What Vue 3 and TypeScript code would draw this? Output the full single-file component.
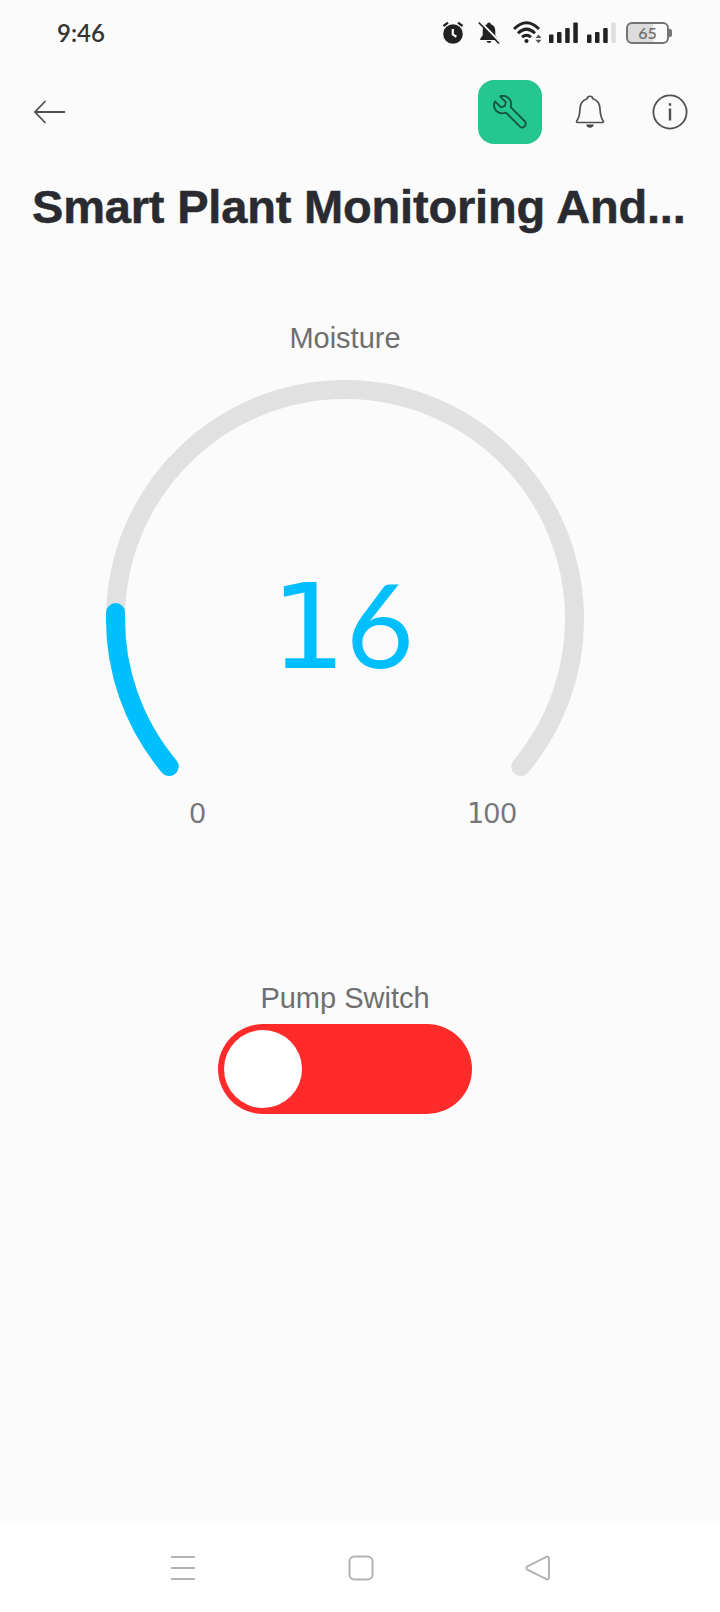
<script setup lang="ts">
import { computed, ref } from 'vue'

const moisture = ref(16)
const pumpOn = ref(false)

const center = { x: 239, y: 239 }
const radius = 229.5
const sweep = 260

function pointAt(percent: number): string {
  const angle = ((140 + (sweep * percent) / 100) * Math.PI) / 180
  const x = center.x + radius * Math.cos(angle)
  const y = center.y + radius * Math.sin(angle)
  return `${x.toFixed(2)} ${y.toFixed(2)}`
}

function arc(percent: number): string {
  const large = (sweep * percent) / 100 > 180 ? 1 : 0
  return `M${pointAt(0)}A${radius} ${radius} 0 ${large} 1 ${pointAt(percent)}`
}

const track = arc(100)
const level = computed(() => arc(moisture.value))
const digits = computed(() => String(moisture.value).split(''))
</script>

<template>
  <div class="screen">
    <header class="status">
      <span class="time">9:46</span>
      <div class="indicators">
        <svg class="alarm" width="22" height="24" viewBox="0 0 22 24">
          <circle cx="11" cy="13" r="9.8" fill="#222" />
          <path d="M1.500 5 6 1.600M20.500 5 16 1.600" stroke="#222" stroke-width="2.200" fill="none" />
          <path d="M10.800 8v5.500l3.600 2.200" stroke="#fbfbfb" stroke-width="2.200" fill="none" />
        </svg>
        <svg class="muted" width="22" height="24" viewBox="0 0 22 24">
          <path d="M11 1.500c1.200 0 1.800.7 1.800 1.800 3.300.9 4.500 3.700 4.500 7v4l2.500 3.400v1.200H2.200v-1.200l2.500-3.400v-4c0-3.300 1.200-6.100 4.500-7 0-1.100.6-1.800 1.800-1.800zM8.500 20h5c-.4 1.300-1.300 2-2.500 2s-2.100-.7-2.500-2z" fill="#222" />
          <path d="M2.500 1 23 22" stroke="#fbfbfb" stroke-width="2.200" />
          <path d="M.8 1.500 21 22.500" stroke="#222" stroke-width="1.700" />
        </svg>
        <svg class="wifi" width="30" height="24" viewBox="0 0 30 24">
          <g fill="none" stroke="#222" stroke-width="2.900">
            <path d="M1 8Q13.500-4.500 26 8" />
            <path d="M5 12.200Q13.500 4 22 12.200" />
            <path d="M9 16.200Q13.500 12.200 18 16.200" />
          </g>
          <circle cx="13.500" cy="20" r="2.100" fill="#222" />
          <path d="m22.500 17 3-3.500 3 3.500zM22.500 18.800l3 3.500 3-3.500z" fill="#555" />
        </svg>
        <svg class="signal" width="30" height="22" viewBox="0 0 30 22" fill="#222">
          <rect y="12.500" width="4.500" height="8.500" rx="1" /><rect x="8" y="10" width="4.500" height="11" rx="1" />
          <rect x="16.200" y="6" width="4.500" height="15" rx="1" /><rect x="24.300" y="0.500" width="4.500" height="20.500" rx="1" />
        </svg>
        <svg class="signal second" width="30" height="22" viewBox="0 0 30 22" fill="#222">
          <rect y="12.500" width="4.500" height="8.500" rx="1" /><rect x="8" y="10" width="4.500" height="11" rx="1" />
          <rect x="16.200" y="6" width="4.500" height="15" rx="1" /><rect x="24.300" y="0.500" width="4.500" height="20.500" rx="1" fill="#dedede" />
        </svg>
        <div class="battery"><span>65</span></div>
      </div>
    </header>

    <nav class="toolbar">
      <svg class="back" width="34" height="26" viewBox="0 0 34 26" fill="none" stroke="#505050" stroke-width="1.800">
        <path d="M32 13H2.500M12.500 2 2 13l10.500 11" />
      </svg>
      <div class="actions">
        <button class="tool" aria-label="Settings">
          <svg width="34" height="34" viewBox="0 0 34 34" fill="none" stroke="#16593f" stroke-width="1.900" stroke-linejoin="round">
            <path d="M7.200 1.300C11.500-.5 17 2.500 18.100 7.200c.2 1.600-.1 3.600-.4 5L32 26.500c2.400 3.500-1.700 7.500-5 5.200L12.900 17.600C7.400 19.800 1.500 16.500 1 10.300c0-1.400.4-2.900 1-3.900l6.100 6 3.700-1.500 1-3.700z" />
          </svg>
        </button>
        <svg class="bell" width="30" height="34" viewBox="0 0 30 34" fill="none" stroke="#505050" stroke-width="1.700" stroke-linejoin="round">
          <path d="M12.200 3.800C12.500.4 17.500.4 17.800 3.800c4.700 1.400 7 5 7.200 10 .2 5.400.6 8.600 3.200 12.100.6.800.3 1.600-.7 1.600h-25c-1 0-1.300-.8-.7-1.600C4.400 22.400 4.800 19.200 5 13.800c.2-5 2.500-8.600 7.200-10z" />
          <path d="M11.300 29.500h7.400c-.2 4.300-7.200 4.300-7.400 0z" fill="#444" stroke="none" />
        </svg>
        <svg class="info" width="36" height="36" viewBox="0 0 36 36" fill="none" stroke="#505050" stroke-width="1.800">
          <circle cx="18" cy="18" r="16.600" />
          <path d="M18 14.500v12M18 9.300v2.500" stroke-width="2.400" />
        </svg>
      </div>
    </nav>

    <h1>Smart Plant Monitoring And...</h1>

    <main>
      <section class="gauge">
        <h2>Moisture</h2>
        <div class="dial">
          <svg width="478" height="398" viewBox="0 0 478 398" fill="none" stroke-width="19" stroke-linecap="round">
            <path :d="track" stroke="#e1e1e1" />
            <path :d="level" stroke="#00bfff" />
          </svg>
          <div class="reading"><span v-for="(d, i) in digits" :key="i" :class="'digit-' + d">{{ d }}</span></div>
        </div>
        <div class="range"><span>0</span><span><b>1</b>00</span></div>
      </section>

      <section class="pump">
        <h2>Pump Switch</h2>
        <button class="switch" :class="{ on: pumpOn }" aria-label="Pump Switch" @click="pumpOn = !pumpOn"><i></i></button>
      </section>
    </main>

    <footer>
      <svg width="26" height="26" viewBox="0 0 26 26" stroke="#b2b2b2" stroke-width="2.200"><path d="M1 2h24M1 13h24M1 24h24" /></svg>
      <svg width="26" height="26" viewBox="0 0 26 26" fill="none" stroke="#b2b2b2" stroke-width="2"><rect x="1.500" y="1.500" width="23" height="23" rx="5" /></svg>
      <svg width="26" height="26" viewBox="0 0 26 26" fill="none" stroke="#b2b2b2" stroke-width="2"><path d="M2 11.700 21.200 1.900Q24 1 24 4v18q0 3-2.800 2.100L2 14.300q-1.500-1.300 0-2.600z" /></svg>
    </footer>
  </div>
</template>

<style>
body {
  margin: 0;
}
</style>

<style scoped>
.screen {
  width: 720px;
  height: 1612px;
  display: flex;
  flex-direction: column;
  background: #fbfbfb;
  font-family: "Liberation Sans", Arial, sans-serif;
  overflow: hidden;
}
.status {
  height: 65px;
  box-sizing: border-box;
  padding: 0 48px 0 57px;
  display: flex;
  justify-content: space-between;
  align-items: center;
}
.time {
  font: 600 24px/30px Lato, sans-serif;
  color: #333;
}
.indicators {
  display: flex;
  align-items: center;
}
.muted { margin-left: 14px; }
.wifi { margin-left: 13px; }
.signal { margin-left: 6px; }
.second { margin-left: 8px; }
.battery {
  position: relative;
  width: 43px;
  height: 22px;
  box-sizing: border-box;
  margin: 0 3px 0 9px;
  border: 2px solid #747474;
  border-radius: 6px;
  background: linear-gradient(90deg, #dcdcdc 65%, #fbfbfb 65%);
  font: 600 16px/18px Lato, sans-serif;
  color: #707070;
  text-align: center;
}
.battery::after {
  content: "";
  position: absolute;
  right: -5px;
  top: 5px;
  width: 3px;
  height: 8px;
  border-radius: 0 2px 2px 0;
  background: #747474;
}
.toolbar {
  height: 94px;
  box-sizing: border-box;
  padding: 0 32px 0 33px;
  display: flex;
  align-items: center;
  justify-content: space-between;
}
.actions {
  display: flex;
  align-items: center;
}
button {
  border: 0;
  padding: 0;
}
.tool {
  width: 64px;
  height: 64px;
  border-radius: 16px;
  background: #25c68f;
  display: flex;
  align-items: center;
  justify-content: center;
}
.bell { margin-left: 33px; }
.info { margin-left: 47px; }
h1 {
  margin: 18px 0 0 32px;
  font-size: 47px;
  line-height: 60px;
  font-weight: 700;
  letter-spacing: -0.18px;
  -webkit-text-stroke: 0.5px #2a2b30;
  color: #2a2b30;
  white-space: nowrap;
}
h2 {
  margin: 0;
  font-size: 29px;
  line-height: 36px;
  font-weight: 400;
  color: #6f6f6f;
  white-space: nowrap;
}
main {
  flex: 1;
  width: 690px;
  display: flex;
  flex-direction: column;
  align-items: center;
}
.gauge {
  margin-top: 83px;
  display: flex;
  flex-direction: column;
  align-items: center;
}
.dial {
  margin-top: 24px;
  height: 398px;
  display: grid;
}
.dial > * {
  grid-area: 1 / 1;
}
.reading {
  height: 140px;
  margin-top: 173px;
  display: flex;
  justify-content: center;
  align-items: baseline;
  font-size: 117px;
  line-height: 140px;
  color: #00bfff;
}
.reading span {
  width: 70px;
  text-align: center;
  font-family: Lato, sans-serif;
}
.reading .digit-1 {
  font-family: "DejaVu Sans Mono", monospace;
  transform: translateX(-4px) scaleX(1.06);
}
.range {
  width: 328px;
  margin: 18px 0 0 17px;
  display: flex;
  justify-content: space-between;
  font-size: 29px;
  line-height: 34px;
  letter-spacing: 0.8px;
  color: #777;
}
.range b {
  font: 400 28px/34px "DejaVu Sans Mono", monospace;
  letter-spacing: 0;
}
.pump {
  margin-top: 149px;
  display: flex;
  flex-direction: column;
  align-items: center;
}
.switch {
  width: 254px;
  height: 90px;
  box-sizing: border-box;
  margin-top: 8px;
  padding: 6px;
  border-radius: 45px;
  background: #ff2b2b;
  display: flex;
}
.switch.on {
  justify-content: flex-end;
}
.switch i {
  width: 78px;
  height: 78px;
  border-radius: 50%;
  background: #fff;
}
footer {
  height: 88px;
  box-sizing: border-box;
  padding: 0 169px 0 170px;
  background: #fff;
  display: flex;
  align-items: center;
  justify-content: space-between;
}
</style>
